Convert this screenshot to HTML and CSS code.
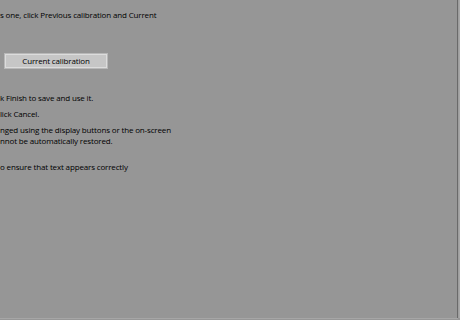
FILE: index.html
```html
<!DOCTYPE html>
<html>
<head>
<meta charset="utf-8">
<link rel="stylesheet" href="styles.css">
</head>
<body>
<div class="frame">
  <div class="content">
    <p class="line l1">s one, click Previous calibration and Current</p>
    <div class="buttons">
      <button class="btn">Current calibration</button>
    </div>
    <p class="line l2">k Finish to save and use it.</p>
    <p class="line l3">lick Cancel.</p>
    <p class="line l4">nged using the display buttons or the on-screen<br>nnot be automatically restored.</p>
    <p class="line l5">o ensure that text appears correctly</p>
  </div>
</div>
</body>
</html>
```
FILE: styles.css
```css
html, body {
  margin: 0;
  padding: 0;
  width: 460px;
  height: 320px;
  overflow: hidden;
  background: #969696;
}
.frame {
  width: 457px;
  height: 318px;
  border-right: 1px solid #6a6a6a;
  box-shadow: 1px 0 0 #9e9e9e, 2px 0 0 #a8a8a8, 0 1px 0 #a6a6a6;
  background: #969696;
  overflow: hidden;
}
.content {
  display: flex;
  flex-direction: column;
  align-items: flex-start;
  padding-top: 9px;
  font-family: "Open Sans", "DejaVu Sans", sans-serif;
  font-size: 8px;
  letter-spacing: -0.15px;
  color: #000;
}
.line {
  margin: 0;
  line-height: 11px;
  white-space: nowrap;
}
.buttons {
  margin-top: 33px;
  margin-left: 4px;
}
.btn {
  width: 104px;
  height: 16px;
  padding: 0;
  margin: 0;
  font-family: "Open Sans", "DejaVu Sans", sans-serif;
  font-size: 8px;
  letter-spacing: -0.15px;
  color: #000;
  background: #c6c6c6;
  border: 1px solid #b8b8b8;
  box-shadow: inset 0 0 0 1px #dcdcdc;
  line-height: 14px;
  display: block;
}
.l2 { margin-top: 23px; }
.l3 { margin-top: 5px; }
.l4 { margin-top: 5px; }
.l5 { margin-top: 15px; }
```
